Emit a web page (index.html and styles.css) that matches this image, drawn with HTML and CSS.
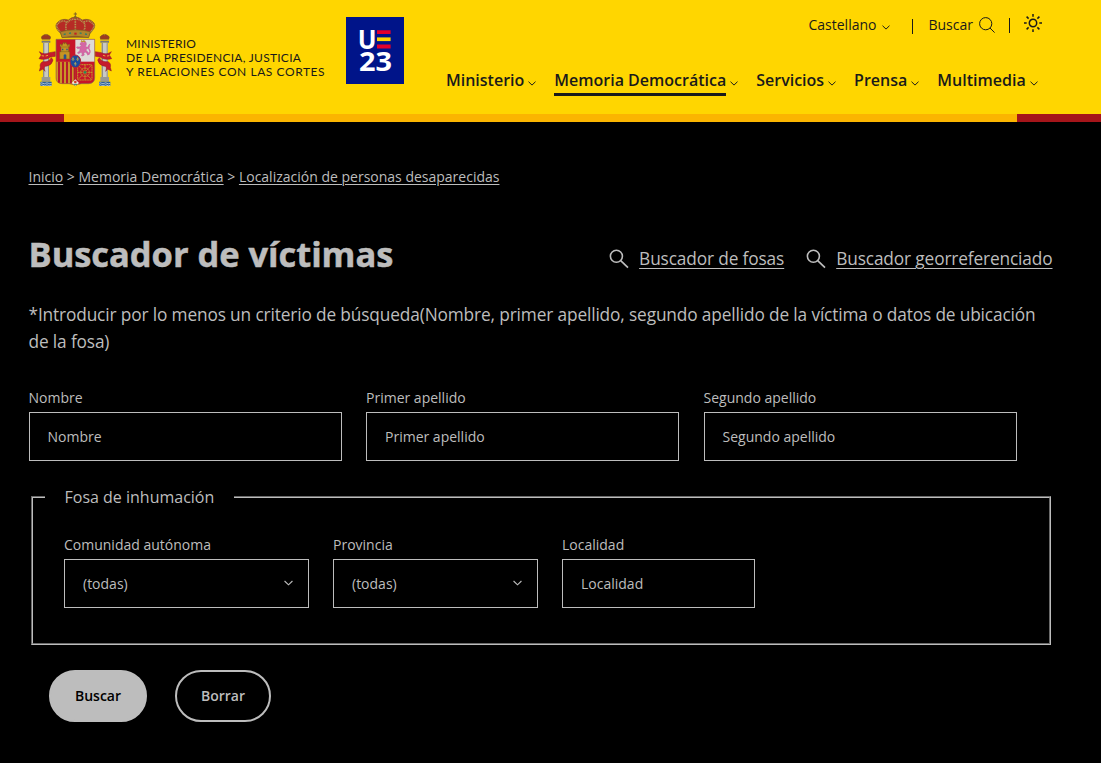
FILE: index.html
```html
<!DOCTYPE html>
<html lang="es">
<head>
<meta charset="utf-8">
<title>Buscador de víctimas</title>
<link rel="stylesheet" href="styles.css">
</head>
<body>
<svg class="defs" aria-hidden="true">
  <symbol id="chev" viewBox="0 0 8 5"><path d="M.5 .7 L4 4.1 L7.5 .7" fill="none" stroke="currentColor" stroke-width="1"/></symbol>
  <symbol id="lens" viewBox="0 0 20 20"><circle cx="7.4" cy="7.3" r="6" fill="none" stroke="currentColor" stroke-width="1.6"/><path d="M11.7 11.6 L19 18.7" stroke="currentColor" stroke-width="1.7"/></symbol>
  <symbol id="pillar" viewBox="0 0 40 162">
    <path d="M8 17 Q3 8 12 5 Q20 -1 28 5 Q37 8 32 17Z" fill="#9d3a22" stroke="#7d5b20" stroke-width="2"/>
    <path d="M8 18h24M20 0v5" stroke="#b38b22" stroke-width="3"/>
    <path d="M7 21h26v6H7z" fill="#777"/>
    <path d="M11 27h18v105H11z" fill="#c9c9c4"/><path d="M11 27h4v105h-4zM26 27h3v105h-3z" fill="#8e8e87"/>
    <path d="M7 130h26v14H7z" fill="#999990"/>
    <path d="M3 144h34v13H3z" fill="#2b5f96"/>
    <path d="M3 149q4 -3 8 0t8 0 8 0 10 0M3 155q4 -3 8 0t8 0 8 0 10 0" fill="none" stroke="#cdd8e0" stroke-width="2.4"/>
  </symbol>
</svg>
<header class="header">
  <svg class="crest" viewBox="0 0 270 270" role="img" aria-label="Escudo de España">
    <use href="#pillar" x="28" y="86" width="40" height="162"/>
    <use href="#pillar" x="204" y="86" width="40" height="162"/>
    <g fill="#c51b2d" stroke="#8c1722" stroke-width="1.5">
      <path d="M76 140 L58 143 Q42 151 28 140 L34 150 27 161 Q48 167 62 156 L76 154Z"/>
      <path d="M64 158 Q57 172 38 170 Q28 175 31 187 L28 198 39 192 45 199 Q38 183 52 183 Q66 180 69 165Z"/>
      <path d="M196 140 L214 143 Q230 151 244 140 L238 150 245 161 Q224 167 210 156 L196 154Z"/>
      <path d="M208 158 Q215 172 234 170 Q244 175 241 187 L244 198 233 192 227 199 Q234 183 220 183 Q206 180 203 165Z"/>
    </g>
    <path d="M35 152l7 1M47 153l7-2M219 151l7 2M231 153l7-1" stroke="#e6a83c" stroke-width="3"/>
    <path d="M97 97 Q95 86 83 76 Q72 61 84 51 Q96 39 115 45 Q135 27 157 45 Q177 39 189 51 Q200 61 188 76 Q177 86 175 97Z" fill="#b62b25" stroke="#756026" stroke-width="2"/>
    <g fill="none" stroke="#b39a50" stroke-width="5" stroke-dasharray="3 2">
      <path d="M99 88 Q72 66 84 56 Q95 43 110 51"/><path d="M173 88 Q200 66 188 56 Q177 43 162 51"/>
      <path d="M112 84 Q101 56 116 49 Q127 40 136 43 Q145 40 156 49 Q171 56 160 84M136 42V84"/>
    </g>
    <path d="M91 80 Q136 69 181 80 L176 98 Q136 89 96 98Z" fill="#b0842a" stroke="#775b20" stroke-width="2"/>
    <path d="M101 88l6-1M117 85l6-1M149 84l6 1M165 87l6 1" stroke="#2f806b" stroke-width="4"/>
    <path d="M133 83h7v6h-7z" fill="#c02025"/>
    <circle cx="136" cy="37" r="4" fill="#826523"/><path d="M136 22v14M131 27h10" stroke="#826523" stroke-width="3"/>
    <path d="M78 103H194V219Q194 235 176 236H155Q141 237 136 242Q131 237 117 236H96Q78 235 78 219Z" fill="#c7152a" stroke="#83754e" stroke-width="2"/>
    <path d="M136 104h57v66h-57z" fill="#dedad8"/>
    <path d="M79 170h57v69Q130 236 117 235H97Q79 235 79 218Z" fill="#c99527"/>
    <path d="M87 170v63M99 170v65M111 170v65M123 170v65M134 170v68" stroke="#b51b2b" stroke-width="6"/>
    <g fill="#c69423" stroke="#725c1d" stroke-width="1.4">
      <path d="M89 162V140H93V125H90V118H94V121H97V117H99V113H103V116H105V113H109V117H112V121H115V118H119V125H116V140H119V162Z"/>
      <path d="M91 140h27M94 126h22"/>
    </g>
    <path d="M101 162v-12q4 -5 8 0v12zM96 131h4v5h-4zM109 131h4v5h-4z" fill="#28538b"/>
    <path d="M151 114l5-4 5 3 5-4 3 5v6l-3 4 6 3 4-4 3 2-3 5-7 2v5l5 4 4 7-4 1-7-7-6 1 2 7-5 3-4-1 3-5-4-5-7 4-4-2 7-7 1-7-7 1-4-4 3-2 6 1 7-5-5-2z" fill="#d566a5" stroke="#b04f8d"/>
    <path d="M172 150q12-7 6-16t2-16" fill="none" stroke="#d566a5" stroke-width="4"/>
    <path d="M152 110l2-5 4 3 4-3 4 4-1 3z" fill="#bd912d"/>
    <g fill="none" stroke="#c49a2a" stroke-width="3" stroke-dasharray="4 1">
      <rect x="143" y="179" width="43" height="46" rx="3"/><path d="M143 202h43M165 179v46M144 180l41 44M185 180l-41 44"/><circle cx="165" cy="202" r="13"/>
    </g>
    <circle cx="165" cy="202" r="4" fill="#2c8758"/>
    <path d="M125 234 L136 223 147 234 136 242Z" fill="#ece5d8"/><circle cx="136" cy="231" r="4" fill="#d03b27"/><path d="M131 238h10" stroke="#2b8758" stroke-width="3"/>
    <ellipse cx="136" cy="169" rx="16" ry="19" fill="#1c4c9b" stroke="#ba2437" stroke-width="3"/>
    <path d="M129 157v11M143 157v11M136 171v11M125 163q4-4 8 0M139 163q4-4 8 0M132 177q4-4 8 0" fill="none" stroke="#b9a75a" stroke-width="2.5"/>
  </svg>
  <div class="ministry"><span class="m1">MINISTERIO</span><span class="m2">DE LA PRESIDENCIA, JUSTICIA</span><span class="m3">Y RELACIONES CON LAS CORTES</span></div>
  <svg class="ue" viewBox="0 0 58 67" role="img" aria-label="UE23">
    <rect width="58" height="67" fill="#001489"/>
    <g class="ue-text"><text x="11.7" y="32" textLength="18.8" lengthAdjust="spacingAndGlyphs">U</text><text x="13" y="54.3" textLength="33" lengthAdjust="spacingAndGlyphs">23</text></g>
    <path d="M31 13.3h13.6v3.8H31zM31 27.6h13.6v3.8H31z" fill="#e4002b"/><path d="M31 20.4h13.6v3.7H31z" fill="#ffd500"/>
  </svg>
  <div class="menus">
    <div class="tools">
      <span class="lang">Castellano</span><svg class="chev lang-chev"><use href="#chev"/></svg>
      <i class="bar bar-a"></i>
      <span class="find">Buscar</span>
      <svg class="find-icon" viewBox="0 0 16 16"><circle cx="6.7" cy="6.7" r="6.1" fill="none" stroke="currentColor"/><path d="M11 11l4.6 4.6" stroke="currentColor"/></svg>
      <i class="bar bar-b"></i>
      <svg class="sun" viewBox="0 0 18 18" fill="none" stroke="currentColor" stroke-width="1.5"><circle cx="9" cy="9" r="3.7"/><path d="M9 0v2.7M9 15.3V18M0 9h2.7M15.3 9H18M2.6 2.6l2 2M13.4 13.4l2 2M15.4 2.6l-2 2M4.6 13.4l-2 2"/></svg>
    </div>
    <nav class="nav">
      <a><span>Ministerio</span><svg class="chev"><use href="#chev"/></svg></a>
      <a class="active"><span>Memoria Democrática</span><svg class="chev"><use href="#chev"/></svg></a>
      <a><span>Servicios</span><svg class="chev"><use href="#chev"/></svg></a>
      <a><span>Prensa</span><svg class="chev"><use href="#chev"/></svg></a>
      <a><span>Multimedia</span><svg class="chev"><use href="#chev"/></svg></a>
    </nav>
  </div>
</header>
<div class="stripe"></div>
<main class="main">
  <div class="crumbs"><a>Inicio</a> &gt; <a>Memoria Democrática</a> &gt; <a>Localización de personas desaparecidas</a></div>
  <div class="heading">
    <h1>Buscador de víctimas</h1>
    <div class="links">
      <div class="link"><svg class="lens"><use href="#lens"/></svg><a>Buscador de fosas</a></div>
      <div class="link"><svg class="lens"><use href="#lens"/></svg><a>Buscador georreferenciado</a></div>
    </div>
  </div>
  <p class="intro">*Introducir por lo menos un criterio de búsqueda(Nombre, primer apellido, segundo apellido de la víctima o datos de ubicación<br>de la fosa)</p>
  <div class="row names">
    <label class="field">Nombre<span class="box">Nombre</span></label>
    <label class="field">Primer apellido<span class="box">Primer apellido</span></label>
    <label class="field">Segundo apellido<span class="box">Segundo apellido</span></label>
  </div>
  <fieldset class="grave">
    <legend>Fosa de inhumación</legend>
    <div class="row places">
      <label class="field">Comunidad autónoma<span class="box select">(todas)<svg class="arrow"><use href="#chev"/></svg></span></label>
      <label class="field">Provincia<span class="box select">(todas)<svg class="arrow"><use href="#chev"/></svg></span></label>
      <label class="field">Localidad<span class="box">Localidad</span></label>
    </div>
  </fieldset>
  <div class="actions"><button class="btn primary">Buscar</button><button class="btn outline">Borrar</button></div>
</main>
</body>
</html>
```
FILE: styles.css
```css
* { box-sizing: border-box; }
body { margin: 0; background: #000; color: #bdbdbd; font: 14px/20px "Open Sans", sans-serif; overflow: hidden; }
svg { display: block; flex: none; }
.defs { width: 0; height: 0; position: absolute; }
.header { height: 114px; background: #ffd600; color: #1a1a1a; display: flex; align-items: flex-start; }
.crest { width: 90px; height: 90px; margin: 5px 6px 0 30px; }
.ministry { width: 220px; margin-top: 37px; display: flex; flex-direction: column; font: 12px/14px Lato, sans-serif; white-space: nowrap; }
.m1 { letter-spacing: .2px; }
.m2 { letter-spacing: .26px; }
.m3 { letter-spacing: .56px; }
.ue { width: 58px; height: 67px; margin-top: 17px; }
.ue-text { font: 700 26px "Open Sans", sans-serif; fill: #fff; }
.menus { margin-left: 42px; flex: 1; }
.tools { height: 50px; display: flex; align-items: center; justify-content: flex-end; padding-right: 59px; }
.chev { width: 8px; height: 5px; margin-left: 4px; }
.lang-chev { margin: 4px 0 0 6px; }
.bar { width: 1px; height: 15px; background: #1a1a1a; margin-top: 2px; }
.bar-a { margin: 2px 15px 0 22px; }
.bar-b { margin: 0 14px 0 14px; }
.find-icon { width: 16px; height: 16px; margin-left: 6px; }
.sun { width: 18px; height: 18px; margin-bottom: 4px; }
.nav { display: flex; gap: 18px; margin-top: 18px; font-size: 16px; line-height: 24px; font-weight: 600; }
.nav a { display: flex; white-space: nowrap; }
.nav span { height: 28px; }
.nav .chev { margin-top: 13px; }
.nav .active span { border-bottom: 3px solid #1a1a1a; }
.stripe { height: 8px; background: #fbb500; border-left: 64px solid #a5151a; border-right: 84px solid #a5151a; }
.main { padding: 45px 50px 0 28.5px; }
.crumbs a, .link a { text-decoration: underline; text-underline-offset: 3px; text-decoration-thickness: 1px; }
.crumbs a { text-underline-offset: 2px; }
.heading { height: 50px; margin-top: 42px; display: flex; justify-content: space-between; }
h1 { margin: 0; font-size: 34.5px; line-height: 50px; font-weight: 700; letter-spacing: -.05px; -webkit-text-stroke: .5px #bdbdbd; white-space: nowrap; }
.links { display: flex; gap: 22px; padding-top: 16px; margin-right: -1.5px; font-size: 17.3px; line-height: 27px; letter-spacing: -.14px; }
.link { display: flex; gap: 10px; white-space: nowrap; }
.lens { width: 20px; height: 20px; margin-top: 4px; }
.intro { margin: 22px 0 0; font-size: 17.3px; line-height: 27px; letter-spacing: -.14px; white-space: nowrap; }
.row { display: grid; column-gap: 24px; }
.names { grid-template-columns: 313px 313px 313px; margin-top: 33px; column-gap: 24.5px; }
.field { display: block; }
.box { display: flex; align-items: center; height: 49px; border: 1px solid #bdbdbd; margin-top: 4px; padding: 0 18px; }
.select { justify-content: space-between; padding-right: 15px; }
.arrow { width: 9px; height: 6px; margin-top: -2px; }
.grave { margin: 25px 0 0 2.5px; height: 159px; padding: 0 12px; border: 2px groove #bdbdbd; min-width: 0; }
.grave legend { padding: 0 19.5px; font-size: 16px; line-height: 22px; }
.places { grid-template-columns: 245px 205px 193px; padding-left: 19px; margin-top: 27px; }
.actions { display: flex; gap: 28px; margin: 25px 0 0 20.5px; }
.btn { height: 52px; border-radius: 26px; font: 600 14px/20px "Open Sans", sans-serif; border: 2px solid #bdbdbd; padding: 0; }
.primary { width: 98px; background: #bdbdbd; color: #000; }
.outline { width: 96px; background: #000; color: #bdbdbd; }
```
